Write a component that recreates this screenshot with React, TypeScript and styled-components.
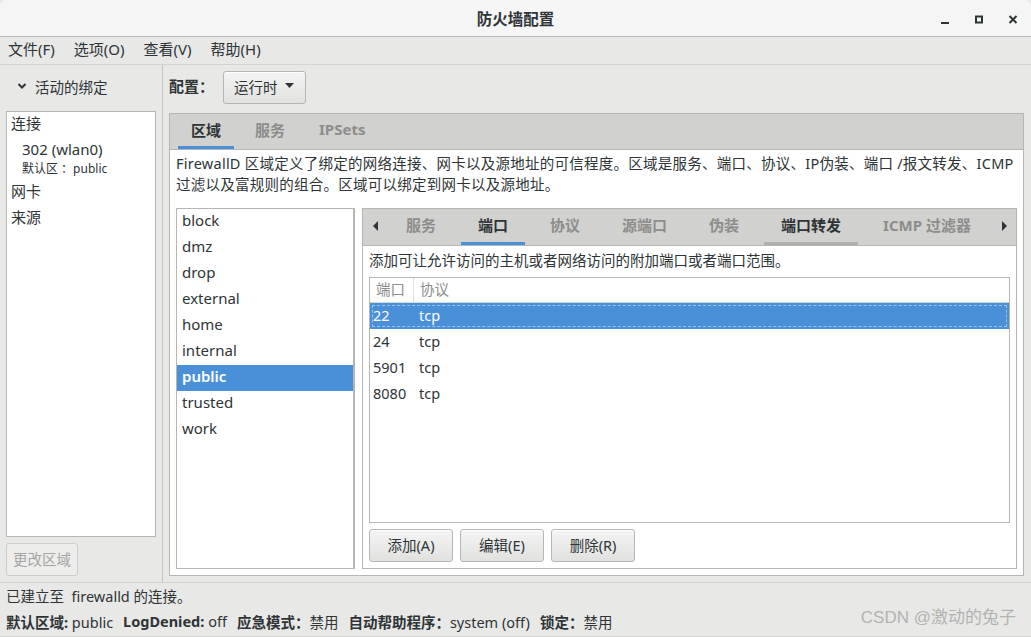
import React from 'react';
import styled, { createGlobalStyle } from 'styled-components';

const GlobalStyle = createGlobalStyle`
  html, body {
    margin: 0;
    padding: 0;
    background: #e8e8e7;
  }
  body {
    font-family: "Noto Sans", "Noto Sans CJK SC", sans-serif;
    color: #2e3436;
  }
  * {
    box-sizing: border-box;
  }
`;

const Window = styled.div`
  position: relative;
  width: 1031px;
  height: 637px;
  display: flex;
  flex-direction: column;
  background: #e8e8e7;
  overflow: hidden;
  font-size: 14.5px;
`;

const TitleBar = styled.div`
  height: 37px;
  flex: none;
  display: grid;
  grid-template-columns: 1fr auto 1fr;
  align-items: center;
  padding-bottom: 3px;
  background: #f5f5f5;
  border-bottom: 1px solid #b9b9b7;
  border-radius: 6px 6px 0 0;
`;

const Title = styled.div`
  font-weight: bold;
  font-size: 15.5px;
  color: #2e3436;
`;

const Controls = styled.div`
  display: flex;
  justify-content: flex-end;
  padding-right: 1px;
  padding-top: 3px;
`;

const ControlButton = styled.div`
  width: 34px;
  height: 34px;
  display: flex;
  align-items: center;
  justify-content: center;
  color: #2e3436;
`;

const MenuBar = styled.div`
  height: 28px;
  flex: none;
  display: flex;
  align-items: center;
  gap: 19px;
  padding-left: 8px;
  padding-bottom: 4px;
  border-bottom: 1px solid #d3d3d1;
`;

const MenuItem = styled.span`
  font-size: 15px;
`;

const Main = styled.div`
  flex: 1;
  display: flex;
  min-height: 0;
`;

const LeftPane = styled.div`
  width: 163px;
  flex: none;
  display: flex;
  flex-direction: column;
  border-right: 1px solid #c4c4c2;
  padding: 0 6px 6px 6px;
`;

const BindingHeader = styled.div`
  height: 46px;
  flex: none;
  display: flex;
  align-items: center;
  gap: 8px;
  padding-left: 11px;
  padding-bottom: 4px;
`;

const BindingList = styled.div`
  flex: 1;
  background: #fff;
  border: 1px solid #b6b6b3;
`;

const BindingItem = styled.div<{ $height: number; $indent?: boolean; $small?: boolean }>`
  height: ${(p) => p.$height}px;
  padding-left: ${(p) => (p.$indent ? 15 : 4)}px;
  font-size: ${(p) => (p.$small ? 12 : 15)}px;
  line-height: ${(p) => (p.$small ? 14 : 22)}px;
  color: #2e3436;
`;

const DisabledButton = styled.div`
  margin-top: 6px;
  width: 72px;
  height: 33px;
  flex: none;
  display: flex;
  align-items: center;
  justify-content: center;
  padding-bottom: 3px;
  border: 1px solid #cdcdcb;
  border-radius: 3px;
  background: #ededec;
  color: #a5a5a3;
  font-size: 14.5px;
`;

const RightPane = styled.div`
  flex: 1;
  display: flex;
  flex-direction: column;
  padding: 6px 7px 6px 6px;
  min-width: 0;
`;

const ConfigRow = styled.div`
  display: flex;
  align-items: center;
  gap: 9px;
  flex: none;
`;

const ConfigLabel = styled.span`
  font-weight: bold;
  font-size: 15px;
  padding-bottom: 4px;
`;

const GtkButton = styled.div<{ $width?: number }>`
  height: 33px;
  width: ${(p) => (p.$width ? `${p.$width}px` : 'auto')};
  padding: 0 10px 3px 10px;
  display: flex;
  align-items: center;
  justify-content: center;
  gap: 6px;
  border: 1px solid #b6b6b3;
  border-radius: 3px;
  background: linear-gradient(#f4f4f4, #e1e1e0);
  box-shadow: inset 0 1px #fff;
  color: #2e3436;
  font-size: 14.5px;
`;

const Notebook = styled.div`
  display: flex;
  flex-direction: column;
  border: 1px solid #b6b6b3;
  background: #fff;
  flex: 1;
  min-height: 0;
  min-width: 0;
`;

const OuterNotebook = styled(Notebook)`
  margin-top: 9px;
`;

const TabBar = styled.div<{ $height: number; $pad: number }>`
  height: ${(p) => p.$height}px;
  flex: none;
  display: flex;
  align-items: stretch;
  gap: 8px;
  padding-left: ${(p) => p.$pad}px;
  background: #d1d1cf;
  border-bottom: 1px solid #b6b6b3;
`;

const Tab = styled.div<{ $state: 'active' | 'hover' | 'idle' }>`
  display: flex;
  align-items: center;
  padding: 0 17px 2px 17px;
  font-weight: bold;
  font-size: 15px;
  color: ${(p) => (p.$state === 'idle' ? '#8d8d8b' : '#2e3436')};
  border-bottom: 3px solid
    ${(p) => (p.$state === 'active' ? '#4a90d9' : p.$state === 'hover' ? '#b0b0ae' : 'transparent')};
`;

const OuterTab = styled(Tab)`
  padding-left: 13px;
  padding-right: 13px;
`;

const TabArrow = styled.div`
  width: 12px;
  display: flex;
  align-items: center;
  justify-content: center;
  padding-bottom: 2px;
`;

const TabArrowRight = styled(TabArrow)`
  margin-left: auto;
  margin-right: 6px;
`;

const OuterContent = styled.div`
  flex: 1;
  display: flex;
  flex-direction: column;
  padding: 3px 6px 6px 6px;
  min-height: 0;
`;

const Description = styled.div`
  font-size: 14.5px;
  line-height: 21px;
  white-space: nowrap;
  letter-spacing: 0.25px;
`;

const ZoneRow = styled.div`
  margin-top: 13px;
  flex: 1;
  display: flex;
  gap: 7px;
  min-height: 0;
`;

const ZoneList = styled.div`
  width: 179px;
  flex: none;
  border: 1px solid #b6b6b3;
  border-right-width: 2px;
  background: #fff;
`;

const ZoneItem = styled.div<{ $selected?: boolean }>`
  height: 26px;
  line-height: 22px;
  padding-left: 5px;
  font-size: 15px;
  background: ${(p) => (p.$selected ? '#4a90d9' : 'transparent')};
  color: ${(p) => (p.$selected ? '#fff' : '#2e3436')};
  font-weight: ${(p) => (p.$selected ? 600 : 400)};
`;

const InnerContent = styled.div`
  flex: 1;
  display: flex;
  flex-direction: column;
  padding: 3px 6px 6px 6px;
  min-height: 0;
`;

const Hint = styled.div`
  font-size: 14.5px;
  line-height: 22px;
  margin-bottom: 6px;
`;

const Table = styled.div`
  flex: 1;
  border: 1px solid #b6b6b3;
  background: #fff;
  display: flex;
  flex-direction: column;
`;

const HeaderRow = styled.div`
  height: 25px;
  display: flex;
  border-bottom: 1px solid #d6d6d4;
  color: #8d8d8b;
  font-size: 14.5px;
`;

const HeaderCell = styled.div<{ $width?: number }>`
  width: ${(p) => (p.$width ? `${p.$width}px` : 'auto')};
  flex: ${(p) => (p.$width ? 'none' : 1)};
  display: flex;
  align-items: center;
  padding: 0 0 3px 6px;
  ${(p) => (p.$width ? 'border-right: 1px solid #e1e1df;' : '')}
`;

const DataRow = styled.div<{ $selected?: boolean }>`
  height: 26px;
  display: flex;
  align-items: center;
  padding-bottom: 3px;
  font-size: 14.5px;
  background: ${(p) => (p.$selected ? '#4a90d9' : 'transparent')};
  color: ${(p) => (p.$selected ? '#fff' : '#2e3436')};
  ${(p) => (p.$selected ? 'outline: 1px dashed rgba(255,255,255,0.45); outline-offset: -3px;' : '')}
`;

const Cell = styled.div<{ $width?: number }>`
  width: ${(p) => (p.$width ? `${p.$width}px` : 'auto')};
  flex: ${(p) => (p.$width ? 'none' : 1)};
  padding-left: 3px;
`;

const ButtonRow = styled.div`
  margin-top: 6px;
  display: flex;
  gap: 7px;
  flex: none;
`;

const StatusBar = styled.div`
  height: 55px;
  flex: none;
  border-top: 1px solid #d3d3d1;
  border-bottom: 1px solid #d3d3d1;
  padding: 0 6px;
  display: flex;
  flex-direction: column;
`;

const StatusLine = styled.div`
  height: 26px;
  display: flex;
  align-items: center;
  padding-bottom: 2px;
  font-size: 14.5px;
  white-space: nowrap;
`;

const StatusItem = styled.span`
  margin-right: 10px;
  b {
    font-weight: bold;
  }
`;

const Watermark = styled.div`
  position: absolute;
  right: 15px;
  bottom: 9px;
  font-size: 17px;
  color: #b3b3b1;
  font-family: "Liberation Sans", "Noto Sans CJK SC", sans-serif;
`;

const zones = ['block', 'dmz', 'drop', 'external', 'home', 'internal', 'public', 'trusted', 'work'];
const ports = [
  { port: '22', proto: 'tcp' },
  { port: '24', proto: 'tcp' },
  { port: '5901', proto: 'tcp' },
  { port: '8080', proto: 'tcp' },
];
const innerTabs: { label: string; state: 'active' | 'hover' | 'idle' }[] = [
  { label: '服务', state: 'idle' },
  { label: '端口', state: 'active' },
  { label: '协议', state: 'idle' },
  { label: '源端口', state: 'idle' },
  { label: '伪装', state: 'idle' },
  { label: '端口转发', state: 'hover' },
  { label: 'ICMP 过滤器', state: 'idle' },
];

const Triangle: React.FC<{ dir: 'left' | 'right' | 'down' }> = ({ dir }) => {
  const pts = dir === 'left' ? '6,1 6,11 1,6' : dir === 'right' ? '1,1 1,11 6,6' : '1,3 10,3 5.5,8';
  return (
    <svg width={dir === 'down' ? 11 : 7} height={12} viewBox={dir === 'down' ? '0 0 11 12' : '0 0 7 12'}>
      <polygon points={pts} fill="#2e3436" />
    </svg>
  );
};

const App: React.FC = () => {
  return (
    <Window>
      <GlobalStyle />
      <TitleBar>
        <div />
        <Title>防火墙配置</Title>
        <Controls>
          <ControlButton>
            <svg width="10" height="10" viewBox="0 0 10 10">
              <rect x="1" y="7" width="8" height="2" fill="#2e3436" />
            </svg>
          </ControlButton>
          <ControlButton>
            <svg width="10" height="10" viewBox="0 0 10 10">
              <rect x="2" y="1.5" width="6" height="6" fill="none" stroke="#2e3436" strokeWidth="2" />
            </svg>
          </ControlButton>
          <ControlButton>
            <svg width="10" height="10" viewBox="0 0 10 10">
              <path d="M1.5 1 L8.5 8 M8.5 1 L1.5 8" stroke="#2e3436" strokeWidth="2" />
            </svg>
          </ControlButton>
        </Controls>
      </TitleBar>

      <MenuBar>
        <MenuItem>文件(F)</MenuItem>
        <MenuItem>选项(O)</MenuItem>
        <MenuItem>查看(V)</MenuItem>
        <MenuItem>帮助(H)</MenuItem>
      </MenuBar>

      <Main>
        <LeftPane>
          <BindingHeader>
            <svg width="10" height="8" viewBox="0 0 10 8">
              <path d="M1.5 2 L5 5.5 L8.5 2" fill="none" stroke="#2e3436" strokeWidth="2" />
            </svg>
            <span>活动的绑定</span>
          </BindingHeader>
          <BindingList>
            <BindingItem $height={26}>连接</BindingItem>
            <BindingItem $height={24} $indent>
              302 (wlan0)
            </BindingItem>
            <BindingItem $height={18} $indent $small>
              默认区 ：public
            </BindingItem>
            <BindingItem $height={26}>网卡</BindingItem>
            <BindingItem $height={26}>来源</BindingItem>
          </BindingList>
          <DisabledButton>更改区域</DisabledButton>
        </LeftPane>

        <RightPane>
          <ConfigRow>
            <ConfigLabel>配置：</ConfigLabel>
            <GtkButton>
              运行时
              <Triangle dir="down" />
            </GtkButton>
          </ConfigRow>

          <OuterNotebook>
            <TabBar $height={36} $pad={8}>
              <OuterTab $state="active">区域</OuterTab>
              <OuterTab $state="idle">服务</OuterTab>
              <OuterTab $state="idle">IPSets</OuterTab>
            </TabBar>
            <OuterContent>
              <Description>
                FirewallD 区域定义了绑定的网络连接、网卡以及源地址的可信程度。区域是服务、端口、协议、IP伪装、端口 /报文转发、ICMP
                <br />
                过滤以及富规则的组合。区域可以绑定到网卡以及源地址。
              </Description>
              <ZoneRow>
                <ZoneList>
                  {zones.map((z) => (
                    <ZoneItem key={z} $selected={z === 'public'}>
                      {z}
                    </ZoneItem>
                  ))}
                </ZoneList>
                <Notebook>
                  <TabBar $height={37} $pad={6}>
                    <TabArrow>
                      <Triangle dir="left" />
                    </TabArrow>
                    {innerTabs.map((t) => (
                      <Tab key={t.label} $state={t.state}>
                        {t.label}
                      </Tab>
                    ))}
                    <TabArrowRight>
                      <Triangle dir="right" />
                    </TabArrowRight>
                  </TabBar>
                  <InnerContent>
                    <Hint>添加可让允许访问的主机或者网络访问的附加端口或者端口范围。</Hint>
                    <Table>
                      <HeaderRow>
                        <HeaderCell $width={44}>端口</HeaderCell>
                        <HeaderCell>协议</HeaderCell>
                      </HeaderRow>
                      {ports.map((p, i) => (
                        <DataRow key={p.port} $selected={i === 0}>
                          <Cell $width={46}>{p.port}</Cell>
                          <Cell>{p.proto}</Cell>
                        </DataRow>
                      ))}
                    </Table>
                    <ButtonRow>
                      <GtkButton $width={84}>添加(A)</GtkButton>
                      <GtkButton $width={84}>编辑(E)</GtkButton>
                      <GtkButton $width={84}>删除(R)</GtkButton>
                    </ButtonRow>
                  </InnerContent>
                </Notebook>
              </ZoneRow>
            </OuterContent>
          </OuterNotebook>
        </RightPane>
      </Main>

      <StatusBar>
        <StatusLine>已建立至&nbsp; firewalld 的连接。</StatusLine>
        <StatusLine>
          <StatusItem>
            <b>默认区域:</b> public
          </StatusItem>
          <StatusItem>
            <b>LogDenied:</b> off
          </StatusItem>
          <StatusItem>
            <b>应急模式：</b>禁用
          </StatusItem>
          <StatusItem>
            <b>自动帮助程序：</b>system (off)
          </StatusItem>
          <StatusItem>
            <b>锁定：</b>禁用
          </StatusItem>
        </StatusLine>
      </StatusBar>
      <Watermark>CSDN @激动的兔子</Watermark>
    </Window>
  );
};

export default App;
